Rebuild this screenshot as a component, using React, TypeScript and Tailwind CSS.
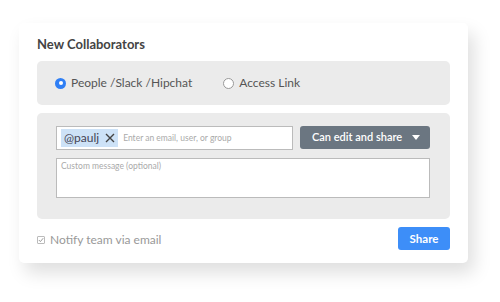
import React from 'react';

const font = { fontFamily: 'Lato, "Open Sans", sans-serif' };

function Radio({ checked, label }: { checked?: boolean; label: string }) {
  return (
    <label className="flex items-center gap-[5px] text-[12px] text-[#555]">
      {checked ? (
        <span className="w-[11px] h-[11px] rounded-full bg-[#2f7ff5] flex items-center justify-center">
          <span className="w-[4px] h-[4px] rounded-full bg-white" />
        </span>
      ) : (
        <span className="w-[11px] h-[11px] rounded-full border border-[#999] bg-white" />
      )}
      {label}
    </label>
  );
}

export default function App() {
  return (
    <div className="w-[500px] h-[302px] bg-white pt-[23px] pl-[19px]" style={font}>
      <div className="w-[449px] h-[240px] bg-white rounded-[5px] shadow-[6px_10px_18px_rgba(0,0,0,0.13)] px-[18px] pt-[14px]">
        <h2 className="text-[13px] font-bold text-[#444] leading-none mt-[1px]">New Collaborators</h2>

        <div className="mt-[10px] h-[44px] bg-[#ebebeb] rounded-[5px] flex items-center pl-[18px] gap-[31px]">
          <Radio checked label="People /Slack /Hipchat" />
          <Radio label="Access Link" />
        </div>

        <div className="mt-[8px] h-[106px] bg-[#ebebeb] rounded-[5px] pl-[19px] pr-[20px] pt-[13px]">
          <div className="flex gap-[7px]">
            <div className="w-[237px] h-[24px] bg-white border border-[#bbb] flex items-center pl-[4px] gap-[5px]">
              <span className="bg-[#cde2f7] h-[18px] px-[3px] flex items-center gap-[6px] text-[12px] text-[#445]">
                @paulj
                <svg width="10" height="10" viewBox="0 0 10 10" className="text-[#444]">
                  <path d="M1 1L9 9M9 1L1 9" stroke="currentColor" strokeWidth="1.4" />
                </svg>
              </span>
              <span className="text-[8.5px] text-[#aaa]">Enter an email, user, or group</span>
            </div>
            <div className="w-[130px] h-[23px] bg-[#6b7681] rounded-[3px] flex items-center pl-[12px] pr-[10px] justify-between">
              <span className="text-[11px] text-white font-semibold">Can edit and share</span>
              <svg width="8" height="5" viewBox="0 0 8 5">
                <path d="M0 0H8L4 5Z" fill="#fff" />
              </svg>
            </div>
          </div>
          <div className="mt-[8px] w-[374px] h-[40px] bg-white border border-[#bbb] px-[4px] pt-[1px] text-[8.5px] text-[#aaa]">
            Custom message (optional)
          </div>
        </div>

        <div className="mt-[8px] flex items-center justify-between">
          <label className="flex items-center gap-[5px] text-[12px] text-[#999] mt-[2px]">
            <span className="w-[8px] h-[8px] border border-[#bbb] rounded-[1px] flex items-center justify-center">
              <svg width="6" height="6" viewBox="0 0 6 6">
                <path d="M0.8 3L2.4 4.6L5.2 1.2" stroke="#999" strokeWidth="1" fill="none" />
              </svg>
            </span>
            Notify team via email
          </label>
          <button className="w-[52px] h-[23px] bg-[#3d8ef8] rounded-[3px] text-white text-[11.5px] font-bold">Share</button>
        </div>
      </div>
    </div>
  );
}
